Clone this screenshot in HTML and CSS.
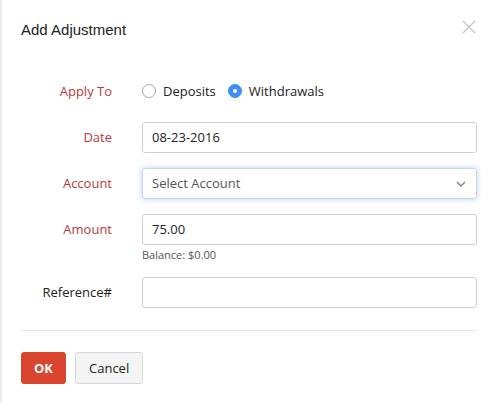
FILE: index.html
```html
<!DOCTYPE html>
<html>
<head>
<meta charset="utf-8">
<link rel="stylesheet" href="styles.css">
</head>
<body>
<div class="dialog">
  <div class="header">
    <h1 class="title">Add Adjustment</h1>
    <svg class="close" width="14" height="14" viewBox="0 0 14 14"><path d="M1 1L13 13M13 1L1 13" stroke="#c4c4c4" stroke-width="1.3" fill="none"/></svg>
  </div>
  <form class="form">
    <div class="row row-radio">
      <label class="label req">Apply To</label>
      <div class="radios">
        <span class="radio"><span class="dot"></span>Deposits</span>
        <span class="radio checked"><span class="dot"></span>Withdrawals</span>
      </div>
    </div>
    <div class="row">
      <label class="label req">Date</label>
      <div class="field"><div class="input">08-23-2016</div></div>
    </div>
    <div class="row">
      <label class="label req">Account</label>
      <div class="field"><div class="input select focus"><span class="placeholder">Select Account</span>
        <svg class="chev" width="10" height="6" viewBox="0 0 10 6"><path d="M1 1L5 5L9 1" stroke="#888" stroke-width="1.5" fill="none"/></svg></div></div>
    </div>
    <div class="row">
      <label class="label req">Amount</label>
      <div class="field"><div class="input">75.00</div><div class="hint">Balance: $0.00</div></div>
    </div>
    <div class="row">
      <label class="label">Reference#</label>
      <div class="field"><div class="input"></div></div>
    </div>
  </form>
  <div class="footer">
    <button class="btn btn-primary">OK</button>
    <button class="btn">Cancel</button>
  </div>
</div>
</body>
</html>
```
FILE: styles.css
```css
* { box-sizing: border-box; }
html, body { margin: 0; padding: 0; background: #fff; }
body { font-family: "Open Sans", "Lato", sans-serif; color: #222; font-size: 13px; }
.dialog { border-left: 2px solid #ececec; min-height: 403px; padding: 0 19px 0 19px; }
.header { display: flex; justify-content: space-between; align-items: flex-start; height: 75px; padding-top: 20px; }
.title { margin: 0; font-family: "Liberation Sans", Arial, sans-serif; font-weight: normal; font-size: 15px; line-height: 20px; color: #222; }
.close { margin-top: 0px; margin-right: 1px; }
.form { display: flex; flex-direction: column; }
.row { display: flex; align-items: flex-start; margin-bottom: 15px; }
.label { width: 91px; flex: none; text-align: right; line-height: 31px; margin-right: 30px; font-size: 13px; color: #222; }
.label.req { color: #b8393a; }
.row-radio { height: 32px; margin-bottom: 15px; }
.row-radio .label { line-height: 32px; }
.radios { display: flex; align-items: center; height: 32px; }
.radio { display: flex; align-items: center; margin-right: 12px; }
.dot { width: 14px; height: 14px; border-radius: 50%; border: 1px solid #aaa; margin-right: 7px; margin-left: 0px; display: inline-block; position: relative; background: #fff; }
.radio.checked .dot { background: #3d8ff5; border-color: #3d8ff5; }
.radio.checked .dot::after { content: ""; position: absolute; left: 5px; top: 5px; width: 4px; height: 4px; border-radius: 50%; background: #fff; margin: -1px 0 0 -1px; }
.field { flex: 1; }
.input { height: 31px; border: 1px solid #cfcfcf; border-radius: 3px; padding: 0 9px; line-height: 29px; font-size: 13px; color: #222; }
.select { display: flex; justify-content: space-between; align-items: center; }
.focus { border-color: #c9d6e8; box-shadow: 0 0 5px 1px rgba(110, 160, 230, 0.35); }
.placeholder { color: #555; }
.chev { margin-right: 1px; }
.hint { font-size: 11px; color: #555; margin-top: 3px; line-height: 14px; }
.footer { border-top: 1px solid #e8e8e8; margin-top: 7px; padding-top: 21px; display: flex; gap: 9px; }
.btn { font-family: inherit; font-size: 13px; height: 32px; padding: 0 13px; border: 1px solid #d8d8d8; border-radius: 3px; background: #f4f4f4; color: #222; }
.btn-primary { background: #d9452f; border-color: #d9452f; color: #fff; font-weight: bold; width: 45px; padding: 0; }
```
